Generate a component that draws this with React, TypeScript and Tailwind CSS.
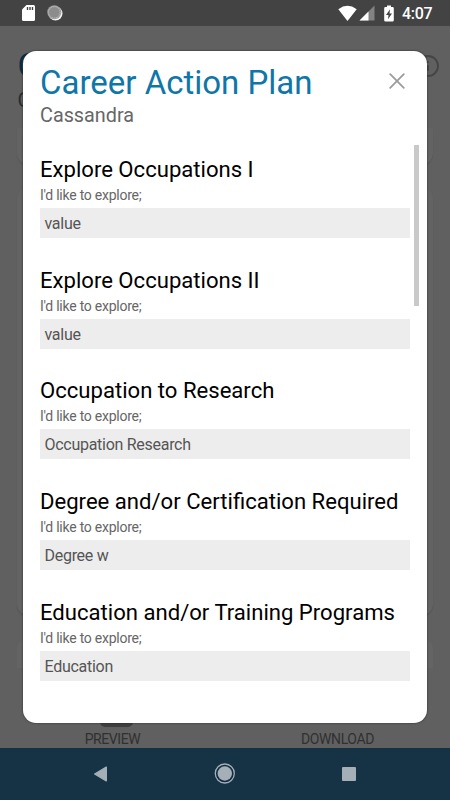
import { Info } from "lucide-react";

interface PlanField {
  title: string;
  value: string;
}

const fields: PlanField[] = [
  { title: "Explore Occupations I", value: "value" },
  { title: "Explore Occupations II", value: "value" },
  { title: "Occupation to Research", value: "Occupation Research" },
  { title: "Degree and/or Certification Required", value: "Degree w" },
  { title: "Education and/or Training Programs", value: "Education" },
];

const StatusBar = () => (
  <header className="h-[26px] bg-[#434343] flex items-center justify-between pl-[21px] pr-[16px]">
    <div className="flex items-center gap-[11px]">
      <svg className="w-[15px] h-[18px]" viewBox="0 0 15 18">
        <path d="M5.5 1H12.5Q14 1 14 2.5V15.5Q14 17 12.5 17H2.5Q1 17 1 15.5V5.5Z" fill="#fff" />
        <path d="M6.5 3V6M9 3V6M11.5 3V6" stroke="#434343" strokeWidth="1.4" />
      </svg>
      <svg className="w-[16px] h-[16px]" viewBox="0 0 16 16">
        <circle cx="8.5" cy="8.5" r="7" fill="#f2f2f2" />
        <circle cx="7.3" cy="7.3" r="7" fill="#a0a0a0" />
        <circle cx="7.3" cy="7.3" r="5.6" fill="#8c8c8c" stroke="#c4c4c4" strokeDasharray="1 1" strokeWidth="0.8" />
      </svg>
    </div>
    <div className="flex items-center">
      <svg className="w-[19px] h-[17px]" viewBox="0 0 19 17">
        <path d="M0.3 4.2Q9.5 -2.6 18.7 4.2L9.5 16Z" fill="#fff" />
      </svg>
      <svg className="w-[16px] h-[16px] ml-[2px]" viewBox="0 0 16 16">
        <path d="M15.5 0.5V15.5H0.5Z" fill="#828282" />
        <path d="M9.5 6.5V15.5H0.5Z" fill="#fff" />
      </svg>
      <svg className="w-[10px] h-[17px] ml-[9px]" viewBox="0 0 10 17">
        <path d="M3 0.5H7V2H8.6Q9.8 2 9.8 3.2V15.3Q9.8 16.5 8.6 16.5H1.4Q0.2 16.5 0.2 15.3V3.2Q0.2 2 1.4 2H3Z" fill="#fff" />
        <path d="M6 4.2L2 10H4.5L4 14.2L8 8.4H5.5Z" fill="#434343" />
      </svg>
      <span className="ml-[8px] w-[32px] whitespace-nowrap text-[16px] leading-[26px] tracking-[-0.3px] font-medium text-white pt-[2px]">
        4:07
      </span>
    </div>
  </header>
);

const PlanPage = () => (
  <main className="flex-1 min-h-0 bg-[#606060] overflow-hidden flex flex-col">
    <div className="h-[102px] pl-[17.6px] pr-[10px] pt-[20px] flex justify-between">
      <div>
        <h2 className="text-[33px] leading-[40px] text-[#0b2d42]">C</h2>
        <p className="pt-px text-[20px] leading-[26px] text-[#2b2b2b]">C</p>
      </div>
      <Info className="w-[24px] h-[24px] mt-[7.5px] text-[#444]" strokeWidth={1.8} />
    </div>
    <div className="mx-[17px] h-[37px] rounded-b-[12px] bg-[#636363] shadow-[0_1px_1px_#545454]" />
    <div className="mx-[17px] mt-[22px] h-[429px] rounded-[12px] bg-[#636363] shadow-[0_1px_1px_#505050]" />
    <div className="mx-[17px] mt-[22px] h-[30px] rounded-t-[12px] bg-[#646464]" />
    <div className="flex-1 grid grid-cols-2 text-[14px] leading-[16px] tracking-[-0.4px] text-[#303030]">
      <div className="flex flex-col items-center justify-end pb-px">
        <span className="w-[33px] h-[24px] rounded-[5px] bg-[#3f3f3f] mb-[4px] ml-[7px]" />
        <span>PREVIEW</span>
      </div>
      <div className="flex flex-col items-center justify-end pb-px">
        <span>DOWNLOAD</span>
      </div>
    </div>
  </main>
);

const NavigationBar = () => (
  <nav className="h-[52px] bg-[#153345] flex items-center justify-between pl-[93px] pr-[93px]">
    <svg className="w-[15px] h-[16px]" viewBox="0 0 15 16">
      <path d="M13.3 1.2V14.8L1.7 8Z" fill="#a4afb7" stroke="#a4afb7" strokeWidth="1.4" strokeLinejoin="round" />
    </svg>
    <svg className="w-[22px] h-[22px]" viewBox="0 0 22 22">
      <circle cx="10.8" cy="10.5" r="8.6" fill="none" stroke="#0d2340" strokeWidth="1" />
      <circle cx="10.8" cy="10.5" r="9.5" fill="none" stroke="#a4afb7" strokeWidth="1.3" />
      <circle cx="10.8" cy="10.5" r="7.2" fill="#a4afb7" />
    </svg>
    <svg className="w-[16px] h-[16px]" viewBox="0 0 16 16">
      <rect x="1" y="1" width="14" height="14" rx="1" fill="#a4afb7" />
    </svg>
  </nav>
);

const PlanFieldRow = ({ title, value }: PlanField) => (
  <section className="h-[110.8px]">
    <h3 className="text-[22.1px] leading-[28px] whitespace-nowrap text-black">{title}</h3>
    <p className="mt-[3px] text-[14px] leading-[18px] tracking-[-0.25px] text-[#666]">I'd like to explore;</p>
    <div className="mt-[4px] h-[30px] w-[370px] bg-[#ededed] pl-[4.5px] text-[16px] leading-[31px] tracking-[-0.28px] text-[#555]">
      {value}
    </div>
  </section>
);

const PlanDialog = () => (
  <div
    role="dialog"
    className="absolute left-[22.5px] top-[50.5px] w-[404.5px] h-[672.5px] rounded-[13px] bg-white shadow-[0_0_2px_#222] overflow-hidden"
  >
    <div className="flex justify-between pl-[17.5px] pr-[22px] pt-[12.5px]">
      <div>
        <h1 className="text-[33px] leading-[40px] text-[#0f76a8]">Career Action Plan</h1>
        <p className="pt-px text-[19.8px] leading-[24px] text-[#666]">Cassandra</p>
      </div>
      <svg className="w-[16px] h-[16px] mt-[10px]" viewBox="0 0 16 16">
        <path d="M1.2 1.2L14.8 14.8M14.8 1.2L1.2 14.8" stroke="#9c9c9c" strokeWidth="1.8" strokeLinecap="round" />
      </svg>
    </div>
    <div className="mt-[16.5px] pl-[17.5px] pr-[8px] flex justify-between">
      <div className="pt-[10.4px]">
        {fields.map((field) => (
          <PlanFieldRow key={field.title} {...field} />
        ))}
      </div>
      <div className="w-[5px] h-[161px] bg-[#c9c9c9]" />
    </div>
  </div>
);

const App = () => {
  return (
    <div className="relative w-[450px] h-[800px] overflow-hidden flex flex-col font-[Roboto,sans-serif]">
      <StatusBar />
      <PlanPage />
      <NavigationBar />
      <PlanDialog />
    </div>
  );
};

export default App;
